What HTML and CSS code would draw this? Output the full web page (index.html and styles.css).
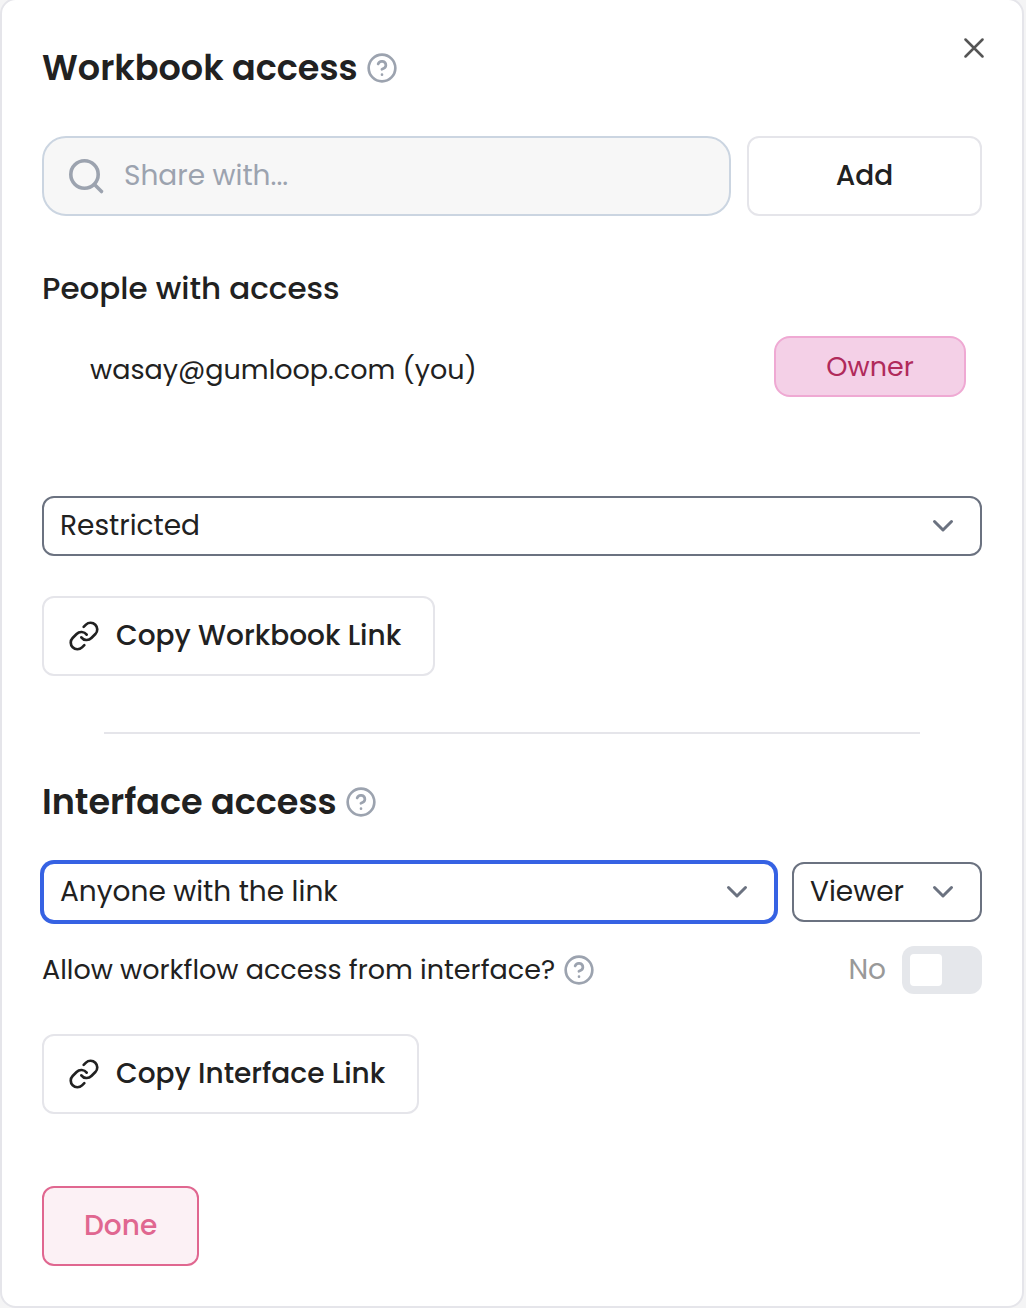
FILE: index.html
```html
<!DOCTYPE html>
<html lang="en">
<head>
<meta charset="utf-8">
<meta name="viewport" content="width=device-width, initial-scale=1">
<title>Workbook access</title>
<link rel="stylesheet" href="styles.css">
</head>
<body>
<svg class="sprite" aria-hidden="true">
  <symbol id="help" viewBox="0 0 24 24"><circle cx="12" cy="12" r="10"/><path d="M9.09 9a3 3 0 0 1 5.83 1c0 2-3 3-3 3M12 17h.01"/></symbol>
  <symbol id="chevron" viewBox="0 0 30 30"><path d="M6.5 10.5l8.5 8.5 8.5-8.5"/></symbol>
  <symbol id="link" viewBox="0 0 24 24"><path d="M10 13a5 5 0 0 0 7.54.54l3-3a5 5 0 0 0-7.07-7.07l-1.72 1.71M14 11a5 5 0 0 0-7.54-.54l-3 3a5 5 0 0 0 7.07 7.07l1.71-1.71"/></symbol>
</svg>
<main class="dialog" role="dialog" aria-labelledby="workbook-title">
  <button class="close" type="button" aria-label="Close">
    <svg class="close-icon" viewBox="0 0 20 20"><path d="M1.5 1.5l17 17M18.5 1.5l-17 17"/></svg>
  </button>

  <section class="workbook">
    <header class="title-row">
      <h1 class="title" id="workbook-title">Workbook access</h1>
      <button class="help" type="button" aria-label="About workbook access"><svg class="help-icon"><use href="#help"/></svg></button>
    </header>
    <form class="share">
      <label class="search">
        <svg class="search-icon" viewBox="0 0 40 40"><circle cx="18.5" cy="18.5" r="13.7"/><path d="M28.5 28.5l7 7"/></svg>
        <input class="search-input" type="text" placeholder="Share with..." aria-label="Share with">
      </label>
      <button class="button add" type="button">Add</button>
    </form>
    <h2 class="subtitle">People with access</h2>
    <div class="person">
      <span class="email">wasay@gumloop.com (you)</span>
      <span class="role">Owner</span>
    </div>
    <div class="select-box">
      <select class="select" aria-label="Workbook access level"><option>Restricted</option><option>Anyone with the link</option></select>
      <svg class="chevron"><use href="#chevron"/></svg>
    </div>
    <button class="button copy" type="button"><svg class="link-icon"><use href="#link"/></svg>Copy Workbook Link</button>
  </section>

  <hr class="divider">

  <section class="interface">
    <header class="title-row">
      <h2 class="title">Interface access</h2>
      <button class="help" type="button" aria-label="About interface access"><svg class="help-icon"><use href="#help"/></svg></button>
    </header>
    <div class="selects">
      <div class="select-box audience">
        <select class="select active" aria-label="Interface access level"><option>Anyone with the link</option><option>Restricted</option></select>
        <svg class="chevron"><use href="#chevron"/></svg>
      </div>
      <div class="select-box permission">
        <select class="select" aria-label="Interface role"><option>Viewer</option><option>Editor</option></select>
        <svg class="chevron"><use href="#chevron"/></svg>
      </div>
    </div>
    <div class="allow">
      <label class="allow-label" for="allow">Allow workflow access from interface?</label>
      <button class="help" type="button" aria-label="About workflow access"><svg class="help-icon"><use href="#help"/></svg></button>
      <span class="state">No</span>
      <input class="switch" id="allow" type="checkbox" role="switch">
    </div>
    <button class="button copy" type="button"><svg class="link-icon"><use href="#link"/></svg>Copy Interface Link</button>
  </section>

  <button class="button done" type="button">Done</button>
</main>
</body>
</html>
```

FILE: styles.css
```css
* {
  box-sizing: border-box;
}

body {
  margin: 0;
  background: #f4f4f5;
  color: #212121;
  font: 400 28px/40px Poppins, Inter, sans-serif;
}

button,
input,
select {
  font: inherit;
  color: inherit;
}

button {
  padding: 0;
  border: 0;
  background: none;
}

svg {
  display: block;
  flex: none;
  fill: none;
  stroke: currentColor;
  stroke-linecap: round;
  stroke-linejoin: round;
}

.sprite {
  position: absolute;
  width: 0;
  height: 0;
}

.dialog {
  position: relative;
  margin: -2px 2px 0 0;
  padding: 40px;
  border: 2px solid #e5e5ea;
  border-radius: 16px;
  background: #fff;
}

.close {
  position: absolute;
  top: 28px;
  right: 28px;
  display: grid;
  place-items: center;
  width: 40px;
  height: 40px;
  color: #555;
}

.close-icon {
  width: 20px;
  height: 20px;
  stroke-width: 2.5;
}

.title-row {
  display: flex;
  align-items: center;
  gap: 8px;
  height: 56px;
}

.title {
  margin: 0;
  font-size: 35px;
  font-weight: 600;
}

.help {
  color: #9ca3af;
}

.help-icon {
  width: 32px;
  height: 32px;
  stroke-width: 2;
}

.share {
  display: flex;
  gap: 16px;
  margin-top: 40px;
}

.search {
  display: flex;
  flex: 1;
  align-items: center;
  gap: 18px;
  min-width: 0;
  height: 80px;
  padding: 0 22px;
  border: 2px solid #cbd5e1;
  border-radius: 24px;
  background: #f7f7f7;
  color: #9ca3af;
}

.search-icon {
  width: 40px;
  height: 40px;
  stroke-width: 3.6;
}

.search-input {
  flex: 1;
  min-width: 0;
  padding: 0;
  border: 0;
  outline: 0;
  background: none;
}

.search-input::placeholder {
  color: #9ca3af;
  opacity: 1;
}

.button {
  display: flex;
  align-items: center;
  justify-content: center;
  height: 80px;
  border: 2px solid #e5e5ea;
  border-radius: 12px;
  background: #fff;
  font-weight: 500;
}

.add {
  width: 25%;
}

.subtitle {
  margin: 48px 0 24px;
  font-size: 31px;
  line-height: 48px;
  font-weight: 500;
}

.person {
  display: flex;
  align-items: center;
  justify-content: space-between;
  padding: 0 16px 0 48px;
}

.email,
.role,
.allow-label {
  font-size: 27px;
}

.email {
  padding-top: 6px;
}

.role {
  width: 192px;
  padding: 9px 8px 8px;
  border: 2px solid #efa9d3;
  border-radius: 16px;
  background: #f4d0e7;
  color: #b02a5b;
  text-align: center;
}

.select-box {
  display: grid;
  align-items: center;
}

.workbook .select-box {
  margin: 99px 0 40px;
}

.select,
.chevron {
  grid-area: 1 / 1;
}

.select {
  width: 100%;
  height: 60px;
  padding: 0 56px 0 16px;
  border: 2px solid #6b7280;
  border-radius: 12px;
  background: #fff;
  appearance: none;
}

.select.active {
  border-color: #3662e3;
  box-shadow: 0 0 0 2px #3662e3;
}

.chevron {
  justify-self: end;
  width: 30px;
  height: 30px;
  margin-right: 24px;
  color: #6b7280;
  stroke-width: 3;
  pointer-events: none;
}

.copy {
  gap: 16px;
  padding: 0 32px 0 24px;
}

.link-icon {
  width: 32px;
  height: 32px;
  stroke-width: 2;
}

.divider {
  height: 2px;
  margin: 56px 62px 40px;
  border: 0;
  background: #e5e5ea;
}

.selects {
  display: flex;
  gap: 16px;
  margin: 32px 0 24px;
}

.audience {
  flex: 1;
}

.permission {
  width: 190px;
}

.allow {
  display: flex;
  align-items: center;
  gap: 8px;
  height: 48px;
  margin-bottom: 40px;
}

.state {
  margin: 0 8px 0 auto;
  color: #999;
}

.switch {
  width: 80px;
  height: 48px;
  margin: 0;
  padding: 8px;
  border-radius: 12px;
  background: #e5e7eb;
  appearance: none;
}

.switch::before {
  content: "";
  display: block;
  width: 32px;
  height: 32px;
  border-radius: 4px;
  background: #fff;
}

.switch:checked::before {
  margin-left: auto;
}

.done {
  margin-top: 72px;
  padding: 0 40px;
  border-color: #e06790;
  background: #fcf1f5;
  color: #e06790;
}
```
